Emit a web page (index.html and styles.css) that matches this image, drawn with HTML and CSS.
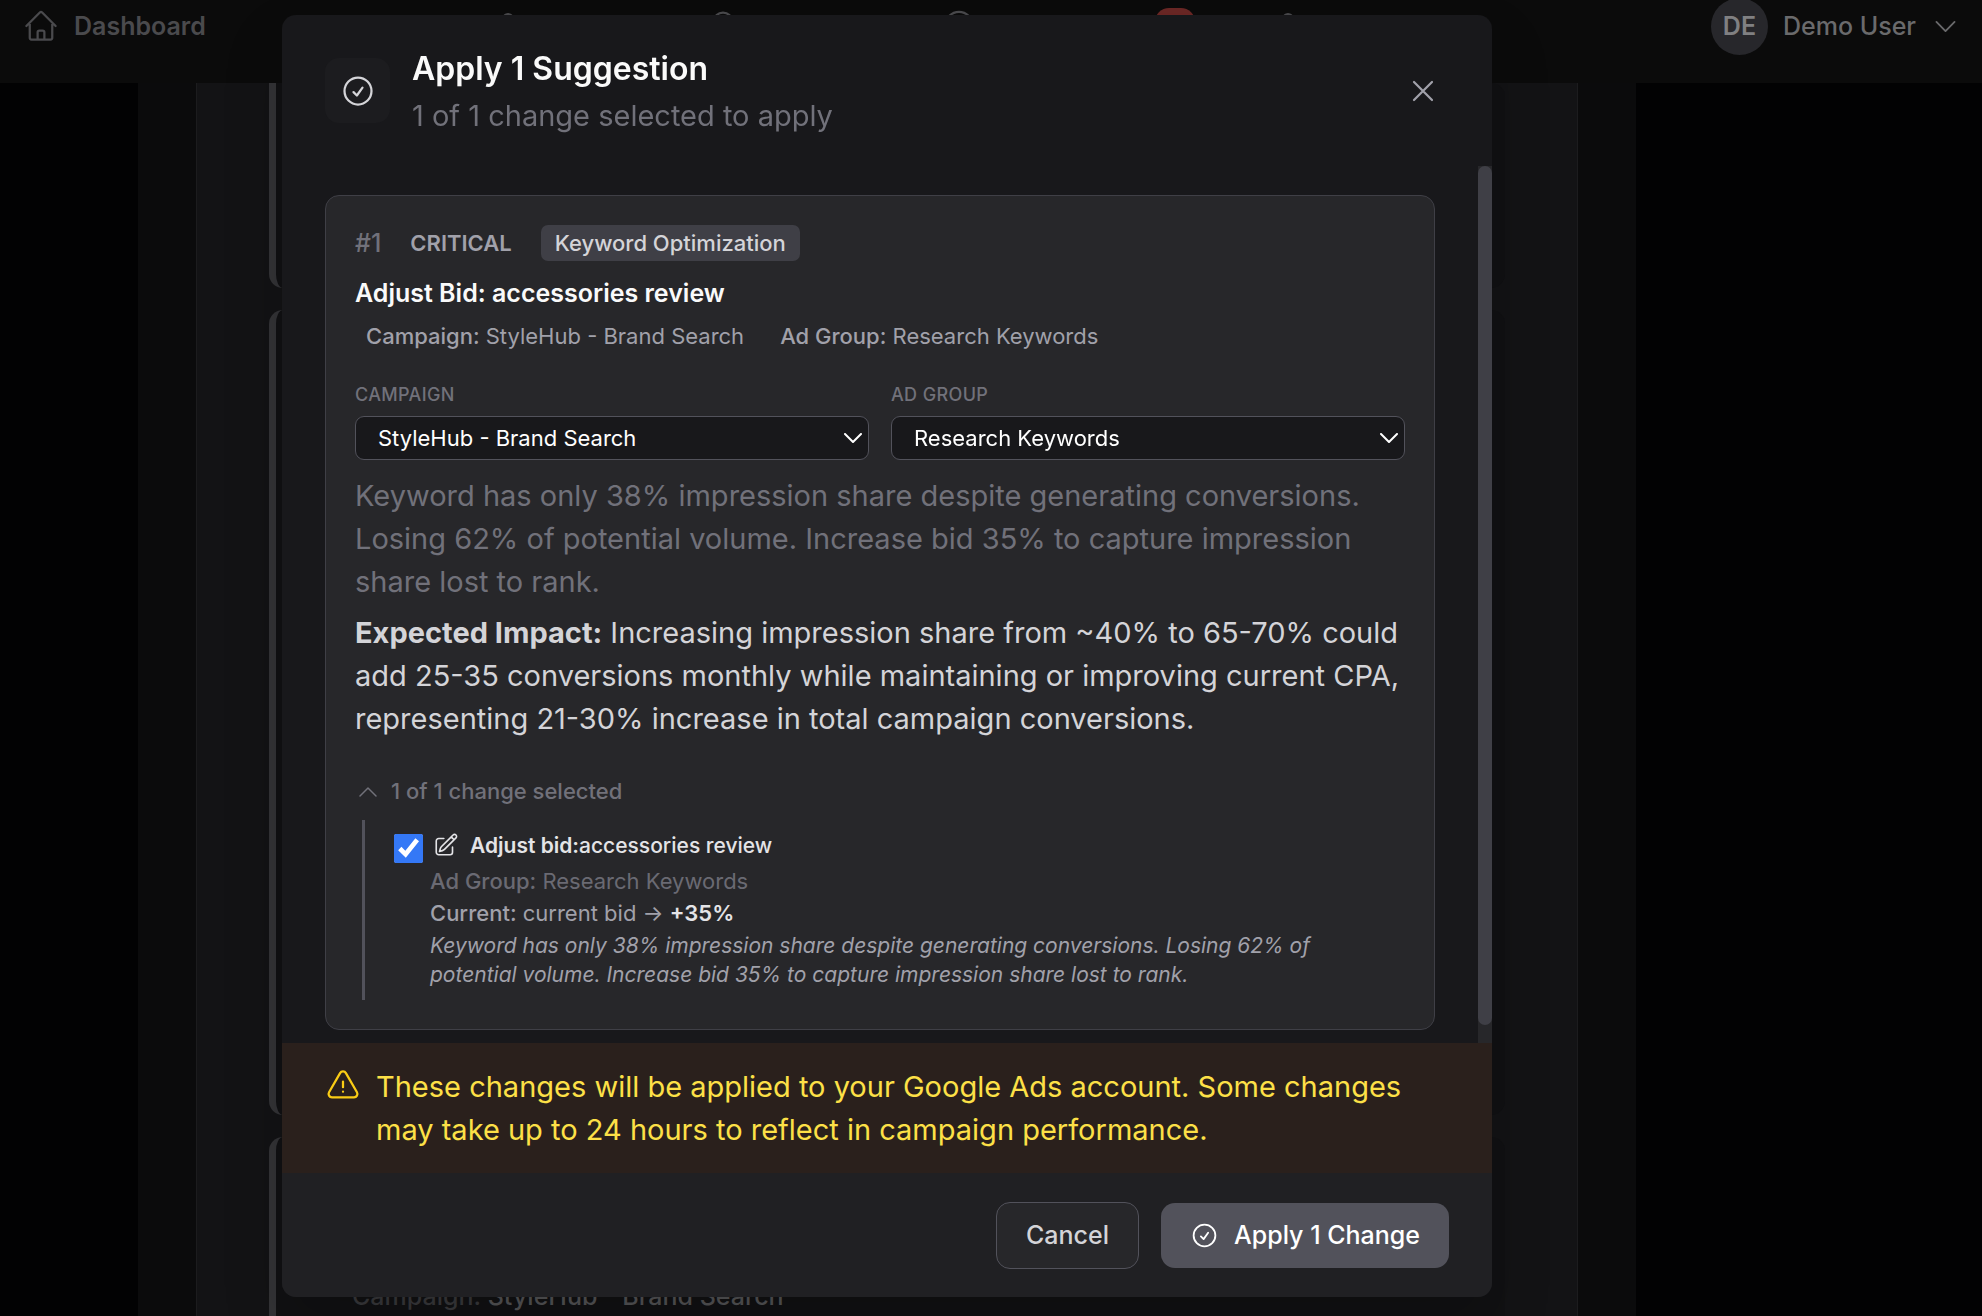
FILE: index.html
```
<!DOCTYPE html>
<html lang="en">
<head>
    <meta charset="UTF-8">
    <meta name="viewport" content="width=device-width, initial-scale=1.0">
    <title>Apply 1 Suggestion</title>
    <link rel="stylesheet" href="styles.css">
</head>
<body>
    <div class="page">
        <header class="topbar">
            <a class="brand" href="#">
                <svg class="icon-lg" viewBox="0 0 24 24"><path d="m2.25 12 8.954-8.955c.44-.439 1.152-.439 1.591 0L21.75 12M4.5 9.75v10.125c0 .621.504 1.125 1.125 1.125H9.75v-4.875c0-.621.504-1.125 1.125-1.125h2.25c.621 0 1.125.504 1.125 1.125V21h4.125c.621 0 1.125-.504 1.125-1.125V9.75M8.25 21h8.25"/></svg>
                Dashboard
            </a>
            <nav class="nav">
                <svg class="icon-lg" viewBox="0 0 24 24"><circle cx="12" cy="7" r="3"/></svg>
                <svg class="icon-lg" viewBox="0 0 24 24"><circle cx="12" cy="9" r="6"/></svg>
                <svg class="icon-lg" viewBox="0 0 24 24"><circle cx="12" cy="11.500" r="9"/></svg>
                <span class="nav-badge"></span>
                <svg class="icon-lg" viewBox="0 0 24 24"><circle cx="12" cy="7" r="3"/></svg>
            </nav>
            <button class="user-menu">
                <span class="avatar">DE</span>
                <span>Demo User</span>
                <svg class="icon-md" viewBox="0 0 24 24"><path d="m19.5 8.25-7.5 7.5-7.5-7.5"/></svg>
            </button>
        </header>
        <main class="content">
            <div class="panel">
                <div class="list-card list-card-first"></div>
                <div class="list-card list-card-tall"></div>
                <div class="list-card list-card-last">
                    <p class="list-meta">Campaign: <span>StyleHub - Brand Search</span></p>
                </div>
            </div>
        </main>
    </div>

    <div class="overlay">
        <div class="modal" role="dialog" aria-labelledby="modalTitle">
            <div class="modal-header">
                <div class="modal-icon">
                    <svg class="icon-lg" viewBox="0 0 24 24"><path d="M9 12.75 11.25 15 15 9.75M21 12a9 9 0 1 1-18 0 9 9 0 0 1 18 0Z"/></svg>
                </div>
                <div class="modal-heading">
                    <h2 id="modalTitle">Apply 1 Suggestion</h2>
                    <p>1 of 1 change selected to apply</p>
                </div>
                <button class="close-btn" aria-label="Close">
                    <svg class="icon-lg" viewBox="0 0 24 24"><path d="M6 18 18 6M6 6l12 12"/></svg>
                </button>
            </div>

            <div class="modal-main">
                <div class="modal-body">
                    <div class="suggestion">
                        <div class="tags">
                            <span class="number">#1</span>
                            <span class="priority">CRITICAL</span>
                            <span class="category">Keyword Optimization</span>
                        </div>
                        <h3>Adjust Bid: accessories review</h3>
                        <div class="meta">
                            <span><b>Campaign:</b> StyleHub - Brand Search</span>
                            <span><b>Ad Group:</b> Research Keywords</span>
                        </div>
                        <div class="fields">
                            <div class="field">
                                <label for="campaign">CAMPAIGN</label>
                                <div class="select-wrap">
                                    <select id="campaign"><option>StyleHub - Brand Search</option></select>
                                    <svg class="select-arrow" viewBox="0 0 18 10"><path d="m1 1 8 8 8-8"/></svg>
                                </div>
                            </div>
                            <div class="field">
                                <label for="adGroup">AD GROUP</label>
                                <div class="select-wrap">
                                    <select id="adGroup"><option>Research Keywords</option></select>
                                    <svg class="select-arrow" viewBox="0 0 18 10"><path d="m1 1 8 8 8-8"/></svg>
                                </div>
                            </div>
                        </div>
                        <p class="reason">Keyword has only 38% impression share despite generating conversions. Losing 62% of potential volume. Increase bid 35% to capture impression share lost to rank.</p>
                        <p class="impact"><b>Expected Impact:</b> Increasing impression share from ~40% to 65-70% could add 25-35 conversions monthly while maintaining or improving current CPA, representing 21-30% increase in total campaign conversions.</p>
                        <button class="toggle">
                            <svg class="toggle-arrow" viewBox="0 0 18 10"><path d="m1 9 8-8 8 8"/></svg>
                            1 of 1 change selected
                        </button>
                        <div class="changes">
                            <input type="checkbox" id="change1" checked>
                            <div class="change">
                                <label class="change-title" for="change1">
                                    <svg class="icon-edit" viewBox="0 0 24 24"><path d="m16.862 4.487 1.687-1.688a1.875 1.875 0 1 1 2.652 2.652L10.582 16.07a4.5 4.5 0 0 1-1.897 1.13L6 18l.8-2.685a4.5 4.5 0 0 1 1.13-1.897l8.932-8.931Zm0 0L19.5 7.125M18 14v4.75A2.25 2.25 0 0 1 15.75 21H5.25A2.25 2.25 0 0 1 3 18.75V8.25A2.25 2.25 0 0 1 5.25 6H10"/></svg>
                                    <span><b>Adjust bid:</b>accessories review</span>
                                </label>
                                <p class="change-group"><b>Ad Group:</b> Research Keywords</p>
                                <p class="change-value"><b>Current:</b> current bid → <strong>+35%</strong></p>
                                <p class="change-note">Keyword has only 38% impression share despite generating conversions. Losing 62% of potential volume. Increase bid 35% to capture impression share lost to rank.</p>
                            </div>
                        </div>
                    </div>
                </div>
                <div class="scrollbar"><div class="scrollbar-thumb"></div></div>
            </div>

            <div class="warning">
                <svg class="icon-lg" viewBox="0 0 24 24"><path d="M12 9v3.75m-9.303 3.376c-.866 1.5.217 3.374 1.948 3.374h14.71c1.73 0 2.813-1.874 1.948-3.374L13.949 3.378c-.866-1.5-3.032-1.5-3.898 0L2.697 16.126ZM12 15.75h.007v.008H12v-.008Z"/></svg>
                <p>These changes will be applied to your Google Ads account. Some changes may take up to 24 hours to reflect in campaign performance.</p>
            </div>

            <div class="modal-footer">
                <button class="btn btn-cancel">Cancel</button>
                <button class="btn btn-apply">
                    <svg class="icon-md" viewBox="0 0 24 24"><path d="M9 12.75 11.25 15 15 9.75M21 12a9 9 0 1 1-18 0 9 9 0 0 1 18 0Z"/></svg>
                    Apply 1 Change
                </button>
            </div>
        </div>
    </div>
</body>
</html>
```
FILE: styles.css
```
* {
    box-sizing: border-box;
}

body {
    margin: 0;
    font-family: Inter, "Liberation Sans", sans-serif;
    font-size: 22px;
    line-height: 29px;
    background-color: #020203;
    color: #d4d4d8;
}

h2, h3, p {
    margin: 0;
}

b {
    font-weight: 500;
}

button, select {
    font-family: inherit;
    cursor: pointer;
}

svg {
    display: block;
    flex-shrink: 0;
    fill: none;
    stroke: currentColor;
    stroke-width: 1.5;
    stroke-linecap: round;
    stroke-linejoin: round;
}

.icon-lg {
    width: 36px;
    height: 36px;
}

.icon-md {
    width: 29px;
    height: 29px;
}

/* page behind the dialog */
.page {
    height: 100vh;
    overflow: hidden;
    display: flex;
    flex-direction: column;
}

.topbar {
    flex-shrink: 0;
    height: 83px;
    padding: 0 22px 31px 23px;
    display: flex;
    align-items: center;
    background-color: #0b0b0b;
    color: #4a4a4d;
    font-size: 25px;
    font-weight: 600;
}

.brand {
    display: flex;
    align-items: center;
    gap: 15px;
    color: inherit;
    text-decoration: none;
}

.nav {
    margin-left: 284px;
    display: grid;
    grid-template-columns: 215px 236px 214px 115px auto;
    align-items: start;
}

.nav-badge {
    width: 40px;
    height: 28px;
    border-radius: 14px;
    background-color: #6b2725;
}

.user-menu {
    margin-left: auto;
    padding: 0;
    display: flex;
    align-items: center;
    gap: 15px;
    border: none;
    background: none;
    color: #6a6a6c;
    font-size: 25px;
    font-weight: 500;
}

.avatar {
    width: 57px;
    height: 57px;
    display: flex;
    justify-content: center;
    align-items: center;
    border-radius: 50%;
    background-color: #27272b;
    color: #808082;
    font-weight: 600;
}

.content {
    flex: 1;
    width: 1498px;
    margin-left: 138px;
    padding: 0 58px;
    background-color: #0b0b0c;
}

.panel {
    height: 100%;
    padding: 0 72px;
    display: flex;
    flex-direction: column;
    gap: 22px;
    border-left: 1px solid #1c1c1e;
    border-right: 1px solid #1c1c1e;
    background-color: #131315;
}

.list-card {
    flex-shrink: 0;
    border-left: 7px solid #343437;
    border-radius: 14px;
    background-color: #111113;
}

.list-card-first {
    height: 205px;
    border-top-left-radius: 0;
}

.list-card-tall {
    height: 805px;
}

.list-card-last {
    height: 300px;
    padding: 138px 76px;
}

.list-meta {
    font-size: 25px;
    line-height: 43px;
    font-weight: 500;
    color: #3a3a3d;
}

.list-meta span {
    color: #555557;
}

/* dialog */
.overlay {
    position: fixed;
    inset: 0;
    padding: 15px 208px 19px 0;
    display: flex;
    justify-content: center;
    align-items: flex-start;
}

.modal {
    width: 100%;
    max-width: 1210px;
    max-height: 100%;
    display: flex;
    flex-direction: column;
    overflow: hidden;
    border-radius: 14px;
    background-color: #18181b;
    box-shadow: 0 30px 60px rgba(0, 0, 0, 0.2);
}

.modal-header {
    flex-shrink: 0;
    height: 151px;
    padding: 0 43px;
    display: flex;
    align-items: center;
    gap: 22px;
}

.modal-icon {
    width: 65px;
    height: 65px;
    display: flex;
    justify-content: center;
    align-items: center;
    border-radius: 14px;
    background-color: #1c1c1f;
}

.modal-heading {
    flex: 1;
    padding-top: 2px;
    font-size: 29px;
    line-height: 43px;
    color: #71717a;
}

.modal-heading h2 {
    margin-bottom: 4px;
    font-size: 32px;
    font-weight: 600;
    color: #fafafa;
}

.close-btn {
    padding: 8px;
    border: none;
    background: none;
    color: #a1a1aa;
}

.modal-main {
    flex: 1;
    min-height: 0;
    display: flex;
}

.modal-body {
    flex: 1;
    padding: 29px 43px 28px;
    overflow-y: auto;
    scrollbar-width: none;
}

.scrollbar {
    width: 14px;
    background-color: #27272a;
}

.scrollbar-thumb {
    height: 98%;
    border-radius: 7px;
    background-color: #3f3f46;
}

.suggestion {
    padding: 29px;
    border: 1px solid #3f3f46;
    border-radius: 14px;
    background-color: #27272a;
}

.tags {
    display: flex;
    align-items: center;
    gap: 15px;
}

.number {
    font-size: 25px;
    font-weight: 500;
    color: #71717a;
}

.priority {
    padding: 0 14px;
    font-weight: 600;
    color: #a1a1aa;
}

.category {
    padding: 0 14px;
    border-radius: 7px;
    line-height: 36px;
    font-weight: 500;
    background-color: #3f3f46;
    color: #d4d4d8;
}

.suggestion h3 {
    margin-top: 14px;
    font-size: 25px;
    line-height: 36px;
    font-weight: 600;
    color: #fafafa;
}

.meta {
    margin-top: 11px;
    padding: 0 11px;
    display: flex;
    gap: 36px;
    color: #a1a1aa;
}

.fields {
    margin-top: 29px;
    display: grid;
    grid-template-columns: 1fr 1fr;
    gap: 22px;
}

.field label {
    display: block;
    margin-bottom: 7px;
    font-size: 18px;
    font-weight: 500;
    letter-spacing: 0.02em;
    color: #71717a;
}

.select-wrap {
    position: relative;
}

.field select {
    display: block;
    width: 100%;
    height: 44px;
    padding: 0 22px;
    appearance: none;
    border: 1px solid #52525b;
    border-radius: 9px;
    background-color: #18181b;
    color: #fff;
    font-size: 22px;
}

.select-arrow {
    position: absolute;
    top: 17px;
    right: 7px;
    width: 18px;
    height: 10px;
    color: #fff;
    stroke-width: 2;
    pointer-events: none;
}

.reason, .impact {
    font-size: 29px;
    line-height: 43px;
}

.reason {
    margin-top: 14px;
    color: #71717a;
}

.impact {
    margin-top: 8px;
}

.impact b {
    font-weight: 700;
}

.toggle {
    margin-top: 37px;
    padding: 0 4px;
    display: flex;
    align-items: center;
    gap: 14px;
    border: none;
    background: none;
    font-size: 22px;
    line-height: 29px;
    font-weight: 500;
    color: #71717a;
}

.toggle-arrow {
    width: 18px;
    height: 10px;
}

.changes {
    margin: 14px 0 0 7px;
    padding: 7px 29px 11px;
    display: flex;
    align-items: flex-start;
    gap: 7px;
    border-left: 3px solid #52525b;
}

.changes input {
    flex-shrink: 0;
    width: 29px;
    height: 29px;
    margin: 7px 0 0;
    accent-color: #3478f6;
}

.change {
    flex: 1;
    color: #a1a1aa;
}

.change-title {
    height: 36px;
    padding-left: 3px;
    display: flex;
    align-items: center;
    gap: 11px;
    font-size: 21px;
    font-weight: 500;
    color: #e4e4e7;
}

.change-title b {
    font-weight: 600;
}

.icon-edit {
    width: 26px;
    height: 26px;
}

.change-group {
    margin-top: 4px;
    color: #6a6a73;
}

.change-value, .change-note {
    margin-top: 3px;
}

.change-value strong {
    font-weight: 600;
    color: #e4e4e7;
}

.change-note {
    font-size: 21px;
    font-style: italic;
}

.warning {
    flex-shrink: 0;
    padding: 22px 43px;
    display: flex;
    gap: 15px;
    background-color: #2a201c;
    color: #fde047;
    font-size: 29px;
    line-height: 43px;
}

.warning svg {
    margin-top: 3px;
    color: #facc15;
}

.modal-footer {
    flex-shrink: 0;
    height: 124px;
    padding: 0 43px;
    display: flex;
    justify-content: flex-end;
    align-items: center;
    gap: 22px;
    background-color: #202023;
}

.btn {
    height: 65px;
    padding: 0 29px;
    display: flex;
    align-items: center;
    gap: 15px;
    border: none;
    border-radius: 14px;
    font-size: 25px;
    font-weight: 500;
}

.btn-cancel {
    height: 67px;
    border: 1px solid #52525b;
    background-color: #27272a;
    color: #d4d4d8;
}

.btn-apply {
    background-color: #52525b;
    color: #fff;
}
```
